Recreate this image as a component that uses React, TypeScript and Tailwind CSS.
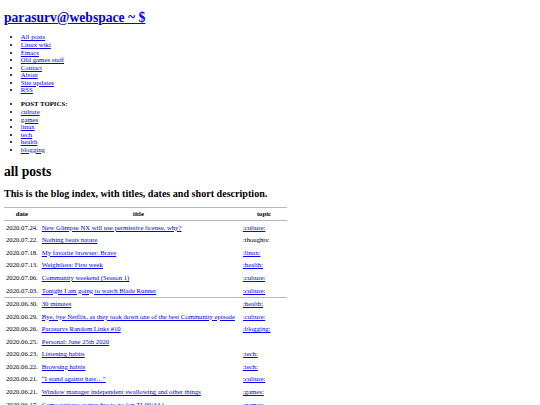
const navLinks = ["All posts", "Linux wiki", "Emacs", "Old games stuff", "Contact", "About", "Site updates", "RSS"];
const topics = ["culture", "games", "linux", "tech", "health", "blogging"];

type Post = { date: string; title: string; topic?: string; link?: boolean; sep?: boolean };

const posts: Post[] = [
  { date: "2020.07.24.", title: "New Glimpse NX will use permissive license, why?", topic: ":culture:", link: true },
  { date: "2020.07.22.", title: "Nothing beats nature", topic: ":thoughts:", link: false },
  { date: "2020.07.18.", title: "My favorite browser: Brave", topic: ":linux:", link: true },
  { date: "2020.07.13.", title: "Weightloss: First week", topic: ":health:", link: true },
  { date: "2020.07.06.", title: "Community weekend (Season 1)", topic: ":culture:", link: true },
  { date: "2020.07.03.", title: "Tonight I am going to watch Blade Runner", topic: ":culture:", link: true },
  { date: "2020.06.30.", title: "30 minutes", topic: ":health:", link: true, sep: true },
  { date: "2020.06.29.", title: "Bye, bye Netflix, as they took down one of the best Community episode", topic: ":culture:", link: true },
  { date: "2020.06.26.", title: "Parasurvs Random Links #10", topic: ":blogging:", link: true },
  { date: "2020.06.25.", title: "Personal: June 25th 2020" },
  { date: "2020.06.23.", title: "Listening habits", topic: ":tech:", link: true },
  { date: "2020.06.22.", title: "Browsing habits", topic: ":tech:", link: true },
  { date: "2020.06.21.", title: "\u201cI stand against hate\u2026\u201d", topic: ":culture:", link: true },
  { date: "2020.06.21.", title: "Window manager independent swallowing and other things", topic: ":games:", link: true },
  { date: "2020.06.17.", title: "Game review: corner has to go (on TI-99/4A)", topic: ":games:", link: true },
  { date: "2020.06.14.", title: "Parasurvs Random Links #9", topic: ":blogging:", link: true },
];

const linkCls = "text-[#0000ee] underline";

export default function App() {
  return (
    <div className="min-h-[405px] bg-white p-[4px] text-black text-[6.8px] leading-[7.57px] font-['Liberation_Serif',serif]">
      <h1 className="mt-[6px] mb-[8px] text-[13.6px] font-bold leading-[15.4px]">
        <a href="#" className={linkCls}>parasurv@webspace ~ $</a>
      </h1>
      <ul className="list-disc pl-[16.8px] mb-[6.5px]">
        {navLinks.map((l) => (
          <li key={l}>
            <a href="#" className={linkCls}>{l}</a>
          </li>
        ))}
      </ul>
      <ul className="list-disc pl-[16.8px]">
        <li className="font-bold">POST TOPICS:</li>
        {topics.map((t) => (
          <li key={t}>
            <a href="#" className={linkCls}>{t}</a>
          </li>
        ))}
      </ul>
      <h1 className="mt-[11px] mb-[8px] text-[13.6px] font-bold leading-[15.4px]">all posts</h1>
      <h2 className="mb-[8px] text-[10.1px] font-bold leading-[11.5px]">
        This is the blog index, with titles, dates and short description.
      </h2>
      <table className="border-collapse border-t border-[#b8b8b8] text-[6.7px]">
        <thead>
          <tr className="border-b border-[#b8b8b8]">
            <th className="px-[2px] py-[2.2px] font-bold text-center">date</th>
            <th className="pl-[2px] pr-[6px] py-[2.2px] font-bold text-center">title</th>
            <th className="w-[46px] px-[2px] py-[2.2px] font-bold text-center">topic</th>
          </tr>
        </thead>
        <tbody>
          {posts.map((p, i) => (
            <tr key={i} className={p.sep ? "border-t border-[#b8b8b8]" : ""}>
              <td className="px-[2px] py-[2.5px] whitespace-nowrap">{p.date}</td>
              <td className="pl-[2px] pr-[6px] py-[2.5px] whitespace-nowrap">
                <a href="#" className={linkCls}>{p.title}</a>
              </td>
              <td className="px-[2px] py-[2.5px] whitespace-nowrap">
                {p.topic ? (
                  p.link ? <a href="#" className={linkCls}>{p.topic}</a> : <span>{p.topic}</span>
                ) : null}
              </td>
            </tr>
          ))}
        </tbody>
      </table>
    </div>
  );
}
